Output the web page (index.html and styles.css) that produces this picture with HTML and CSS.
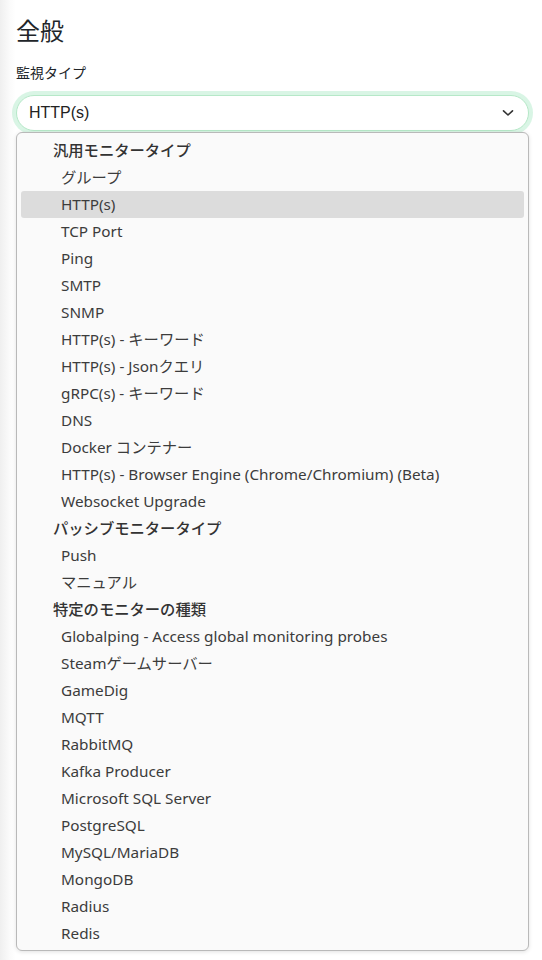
FILE: index.html
```html
<!DOCTYPE html>
<html lang="ja">
<head>
<meta charset="utf-8">
<link rel="stylesheet" href="styles.css">
</head>
<body>
<div class="page">
  <h1 class="title">全般</h1>
  <div class="field">
    <label class="label">監視タイプ</label>
    <div class="select">
      <span class="select-value">HTTP(s)</span>
      <svg class="chev" width="12" height="8" viewBox="0 0 12 8"><path d="M1.5 1.8 L6 6 L10.5 1.8" fill="none" stroke="#333" stroke-width="1.6" stroke-linecap="round" stroke-linejoin="round"/></svg>
    </div>
    <ul class="menu">
      <li class="group">汎用モニタータイプ</li>
      <li class="opt">グループ</li>
      <li class="opt active">HTTP(s)</li>
      <li class="opt">TCP Port</li>
      <li class="opt">Ping</li>
      <li class="opt">SMTP</li>
      <li class="opt">SNMP</li>
      <li class="opt">HTTP(s) - キーワード</li>
      <li class="opt">HTTP(s) - Jsonクエリ</li>
      <li class="opt">gRPC(s) - キーワード</li>
      <li class="opt">DNS</li>
      <li class="opt">Docker コンテナー</li>
      <li class="opt">HTTP(s) - Browser Engine (Chrome/Chromium) (Beta)</li>
      <li class="opt">Websocket Upgrade</li>
      <li class="group">パッシブモニタータイプ</li>
      <li class="opt">Push</li>
      <li class="opt">マニュアル</li>
      <li class="group">特定のモニターの種類</li>
      <li class="opt">Globalping - Access global monitoring probes</li>
      <li class="opt">Steamゲームサーバー</li>
      <li class="opt">GameDig</li>
      <li class="opt">MQTT</li>
      <li class="opt">RabbitMQ</li>
      <li class="opt">Kafka Producer</li>
      <li class="opt">Microsoft SQL Server</li>
      <li class="opt">PostgreSQL</li>
      <li class="opt">MySQL/MariaDB</li>
      <li class="opt">MongoDB</li>
      <li class="opt">Radius</li>
      <li class="opt">Redis</li>
    </ul>
  </div>
</div>
</body>
</html>
```
FILE: styles.css
```css
html, body {
  margin: 0;
  padding: 0;
}
body {
  width: 542px;
  height: 960px;
  overflow: hidden;
  background: linear-gradient(to right, #efefef 0px, #fbfbfb 10px, #ffffff 16px);
  font-family: "Noto Sans CJK JP", "Noto Sans", sans-serif;
  color: #212529;
}
.page {
  padding: 14px 12px 0 16px;
}
.title {
  margin: 0;
  font-size: 24px;
  font-weight: 400;
  line-height: 32px;
  color: #212529;
}
.field {
  position: relative;
  margin-top: 16px;
}
.label {
  display: block;
  font-size: 14px;
  line-height: 20px;
  color: #212529;
}
.select {
  margin-top: 13px;
  height: 34px;
  border: 1px solid #b6e8c8;
  border-radius: 18px;
  box-shadow: 0 0 0 4px rgba(120, 220, 160, 0.28);
  background: #fff;
  display: flex;
  align-items: center;
  justify-content: space-between;
  padding: 0 14px 0 12px;
  box-sizing: content-box;
  width: 485px;
}
.select-value {
  font-family: "Liberation Sans", Arial, sans-serif;
  font-size: 16px;
  color: #222;
}
.chev {
  display: block;
}
.menu {
  position: absolute;
  left: 0;
  top: 70px;
  width: 503px;
  margin: 0;
  list-style: none;
  padding: 4px 4px 3px 4px;
  background: #fafafa;
  border: 1px solid #b9b9b9;
  border-radius: 6px;
  box-shadow: 0 1px 4px rgba(0, 0, 0, 0.12);
  font-family: "Noto Sans", "Noto Sans CJK JP", sans-serif;
  font-size: 15.3px;
  color: #3c3c3c;
}
.menu li {
  height: 27px;
  line-height: 27px;
  white-space: nowrap;
  border-radius: 3px;
}
.group {
  padding-left: 32px;
  font-weight: 500;
  color: #333;
}
.opt {
  padding-left: 40px;
}
.active {
  background: #dcdcdc;
}
```
